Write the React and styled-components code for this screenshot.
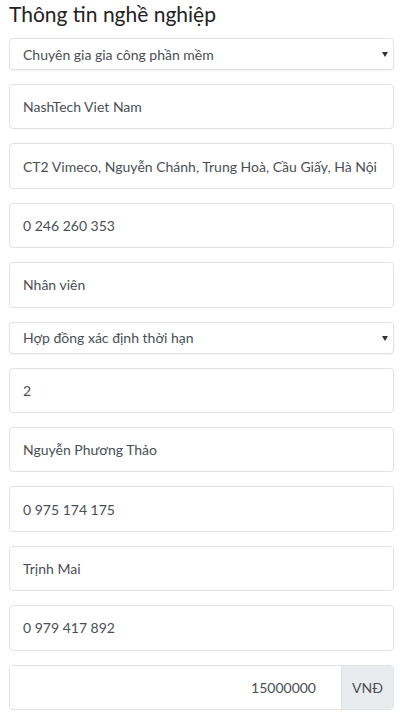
import styled, { createGlobalStyle } from "styled-components";

const GlobalStyle = createGlobalStyle`
  html, body {
    margin: 0;
    padding: 0;
    background: #ffffff;
    font-family: "Lato", "Noto Sans", sans-serif;
  }
  * {
    box-sizing: border-box;
  }
`;

const jobFields = [
  { kind: "select", value: "Chuyên gia gia công phần mềm" },
  { kind: "input", value: "NashTech Viet Nam" },
  { kind: "input", value: "CT2 Vimeco, Nguyễn Chánh, Trung Hoà, Cầu Giấy, Hà Nội" },
  { kind: "input", value: "0 246 260 353" },
  { kind: "input", value: "Nhân viên" },
  { kind: "select", value: "Hợp đồng xác định thời hạn" },
  { kind: "input", value: "2" },
  { kind: "input", value: "Nguyễn Phương Thảo" },
  { kind: "input", value: "0 975 174 175" },
  { kind: "input", value: "Trịnh Mai" },
  { kind: "input", value: "0 979 417 892" },
];

export default function App() {
  return (
    <>
      <GlobalStyle />
      <Page>
        <Title>Thông tin nghề nghiệp</Title>
        <Form>
          {jobFields.map((field, i) =>
            field.kind === "select" ? (
              <SelectWrap key={i}>
                <Select defaultValue={field.value}>
                  <option>{field.value}</option>
                </Select>
                <Caret viewBox="0 0 6 5">
                  <path d="M0 0h6L3 5z" fill="#333" />
                </Caret>
              </SelectWrap>
            ) : (
              <Input key={i} readOnly defaultValue={field.value} />
            )
          )}
          <InputGroup>
            <GroupInput readOnly defaultValue="15000000" />
            <Addon>VNĐ</Addon>
          </InputGroup>
        </Form>
      </Page>
    </>
  );
}

const Page = styled.div`
  padding: 0 6px 0 9px;
`;

const Title = styled.h3`
  margin: 0 0 10px;
  font-size: 21px;
  line-height: 28px;
  font-weight: 400;
  color: #222;
`;

const Form = styled.div`
  display: flex;
  flex-direction: column;
  gap: 14px;
`;

const fieldBase = `
  width: 100%;
  border: 1px solid #e2e2e2;
  border-radius: 4px;
  background: #fff;
  font-family: "Lato", "Noto Sans", sans-serif;
  color: #4a4f55;
  outline: none;
  margin: 0;
`;

const Input = styled.input`
  ${fieldBase}
  height: 45.4px;
  padding: 0 12px 0 13px;
  font-size: 14px;
`;

const SelectWrap = styled.div`
  position: relative;
`;

const Select = styled.select`
  ${fieldBase}
  display: block;
  height: 32px;
  padding: 0 24px 0 13px;
  font-size: 14px;
  appearance: none;
  -webkit-appearance: none;
  box-shadow: 0 1px 2px rgba(0, 0, 0, 0.06);
`;

const Caret = styled.svg`
  position: absolute;
  right: 6px;
  top: 14px;
  width: 6px;
  height: 5px;
  pointer-events: none;
`;

const InputGroup = styled.div`
  display: flex;
  height: 45.4px;
  border: 1px solid #e2e2e2;
  border-radius: 4px;
  overflow: hidden;
`;

const GroupInput = styled.input`
  flex: 1;
  min-width: 0;
  border: none;
  outline: none;
  padding: 0 25px 0 13px;
  font-family: "Lato", "Noto Sans", sans-serif;
  font-size: 14px;
  color: #4a4f55;
  text-align: right;
`;

const Addon = styled.div`
  display: flex;
  align-items: center;
  justify-content: center;
  width: 52px;
  background: #e9ecef;
  border-left: 1px solid #e2e2e2;
  font-size: 14px;
  color: #4a4f55;
`;
